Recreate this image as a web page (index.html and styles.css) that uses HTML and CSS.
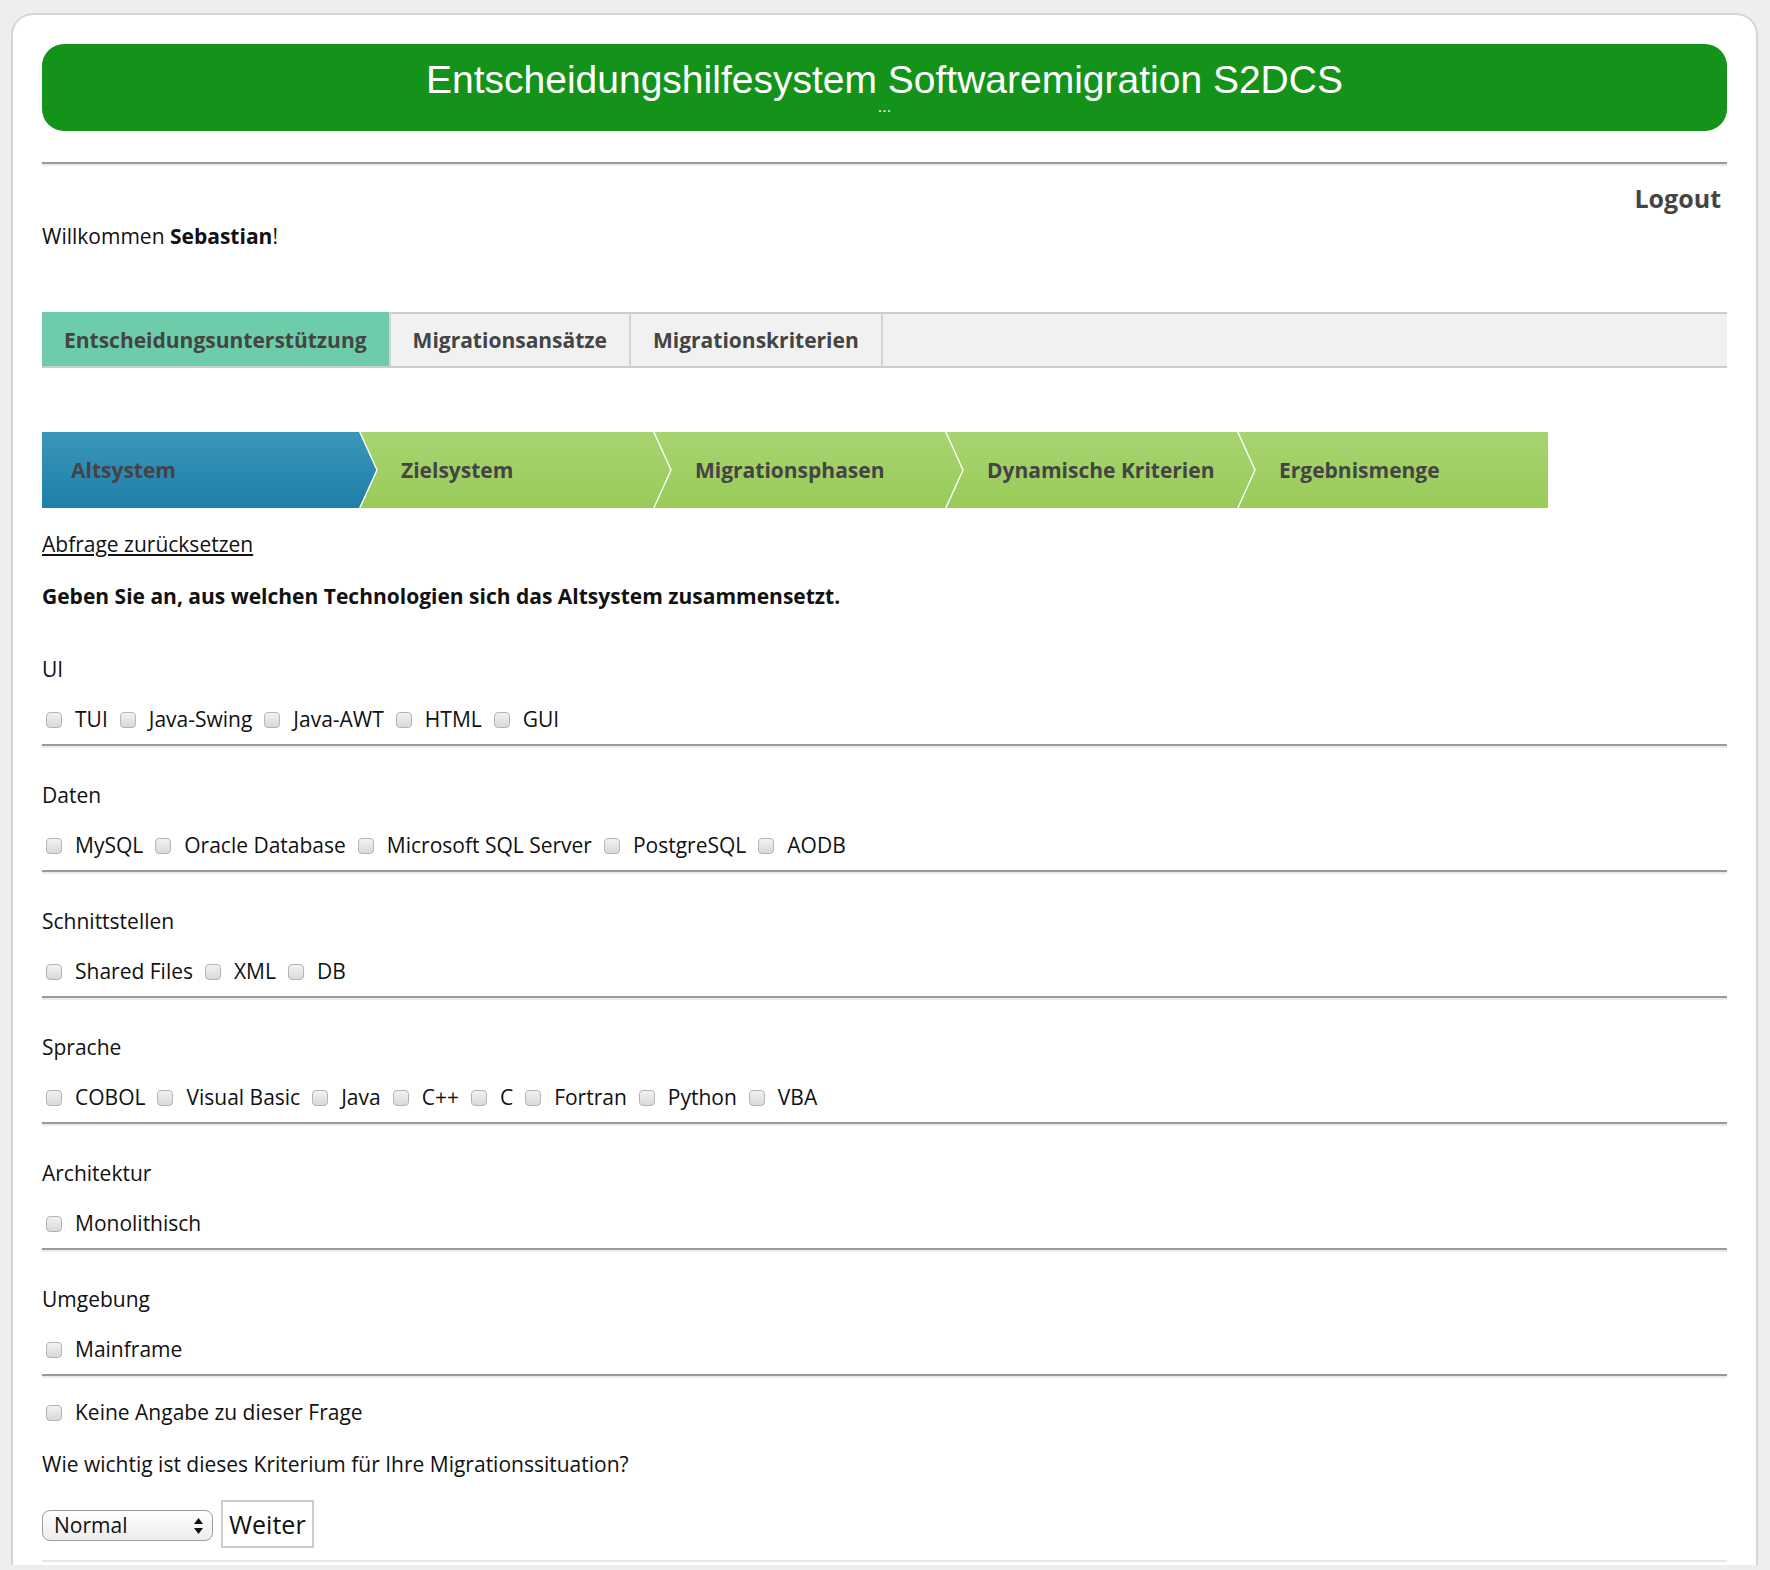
FILE: index.html
```html
<!DOCTYPE html>
<html lang="de">
<head>
<meta charset="utf-8">
<title>Entscheidungshilfesystem Softwaremigration S2DCS</title>
<link rel="stylesheet" href="styles.css">
</head>
<body>
<div class="page">
  <header class="banner">
    <h1 class="banner-title">Entscheidungshilfesystem Softwaremigration S2DCS</h1>
    <div class="banner-sub">...</div>
  </header>
  <hr class="rule rule-top">
  <div class="logout-row"><a class="logout" href="#">Logout</a></div>
  <p class="welcome">Willkommen <strong>Sebastian</strong>!</p>

  <nav class="tabs">
    <a class="tab tab-active" href="#">Entscheidungsunterstützung</a>
    <a class="tab" href="#">Migrationsansätze</a>
    <a class="tab" href="#">Migrationskriterien</a>
  </nav>

  <div class="steps">
    <div class="step step-first step-current">Altsystem</div>
    <div class="step step-mid"><svg class="chev" viewBox="0 0 19 76" width="19" height="76"><polyline points="0.8,0 18,38 0.8,76" fill="none" stroke="#fff" stroke-width="1.4"/></svg>Zielsystem</div>
    <div class="step step-mid step-w2"><svg class="chev" viewBox="0 0 19 76" width="19" height="76"><polyline points="0.8,0 18,38 0.8,76" fill="none" stroke="#fff" stroke-width="1.4"/></svg>Migrationsphasen</div>
    <div class="step step-mid step-w2"><svg class="chev" viewBox="0 0 19 76" width="19" height="76"><polyline points="0.8,0 18,38 0.8,76" fill="none" stroke="#fff" stroke-width="1.4"/></svg>Dynamische Kriterien</div>
    <div class="step step-last"><svg class="chev" viewBox="0 0 19 76" width="19" height="76"><polyline points="0.8,0 18,38 0.8,76" fill="none" stroke="#fff" stroke-width="1.4"/></svg>Ergebnismenge</div>
  </div>

  <a class="reset" href="#">Abfrage zurücksetzen</a>
  <p class="question">Geben Sie an, aus welchen Technologien sich das Altsystem zusammensetzt.</p>

  <form class="form">
    <div class="group group-first">
      <div class="group-label">UI</div>
      <div class="opts">
        <label class="opt"><input type="checkbox">TUI</label>
        <label class="opt"><input type="checkbox">Java-Swing</label>
        <label class="opt"><input type="checkbox">Java-AWT</label>
        <label class="opt"><input type="checkbox">HTML</label>
        <label class="opt"><input type="checkbox">GUI</label>
      </div>
      <hr class="rule rule-group">
    </div>
    <div class="group">
      <div class="group-label">Daten</div>
      <div class="opts">
        <label class="opt"><input type="checkbox">MySQL</label>
        <label class="opt"><input type="checkbox">Oracle Database</label>
        <label class="opt"><input type="checkbox">Microsoft SQL Server</label>
        <label class="opt"><input type="checkbox">PostgreSQL</label>
        <label class="opt"><input type="checkbox">AODB</label>
      </div>
      <hr class="rule rule-group">
    </div>
    <div class="group">
      <div class="group-label">Schnittstellen</div>
      <div class="opts">
        <label class="opt"><input type="checkbox">Shared Files</label>
        <label class="opt"><input type="checkbox">XML</label>
        <label class="opt"><input type="checkbox">DB</label>
      </div>
      <hr class="rule rule-group">
    </div>
    <div class="group">
      <div class="group-label">Sprache</div>
      <div class="opts">
        <label class="opt"><input type="checkbox">COBOL</label>
        <label class="opt"><input type="checkbox">Visual Basic</label>
        <label class="opt"><input type="checkbox">Java</label>
        <label class="opt"><input type="checkbox">C++</label>
        <label class="opt"><input type="checkbox">C</label>
        <label class="opt"><input type="checkbox">Fortran</label>
        <label class="opt"><input type="checkbox">Python</label>
        <label class="opt"><input type="checkbox">VBA</label>
      </div>
      <hr class="rule rule-group">
    </div>
    <div class="group">
      <div class="group-label">Architektur</div>
      <div class="opts">
        <label class="opt"><input type="checkbox">Monolithisch</label>
      </div>
      <hr class="rule rule-group">
    </div>
    <div class="group">
      <div class="group-label">Umgebung</div>
      <div class="opts">
        <label class="opt"><input type="checkbox">Mainframe</label>
      </div>
      <hr class="rule rule-group">
    </div>

    <div class="opts opts-none">
      <label class="opt"><input type="checkbox">Keine Angabe zu dieser Frage</label>
    </div>
    <p class="importance">Wie wichtig ist dieses Kriterium für Ihre Migrationssituation?</p>
    <div class="controls">
      <span class="select-wrap">
        <select class="select">
          <option>Normal</option>
          <option>Wichtig</option>
          <option>Unwichtig</option>
        </select>
        <svg class="select-arrows" viewBox="0 0 9 16" width="9" height="16"><polygon points="4.5,0 9,6 0,6" fill="#111"/><polygon points="0,10 9,10 4.5,16" fill="#111"/></svg>
      </span>
      <button type="button" class="btn">Weiter</button>
    </div>
    <div class="form-end"></div>
  </form>
</div>
</body>
</html>
```
FILE: styles.css
```css
html, body {
  margin: 0;
  padding: 0;
}
body {
  background: #eeeeee;
  font-family: "Open Sans", "DejaVu Sans", sans-serif;
  font-size: 21px;
  color: #111;
}
.page {
  margin: 13px 12px 0 11px;
  background: #fff;
  border: 2px solid #d6d6d6;
  border-bottom: 0;
  border-radius: 22px 22px 0 0;
  padding: 29px 29px 3px;
}
.banner {
  background: #14931a;
  border-radius: 22px;
  height: 87px;
  box-sizing: border-box;
  padding-top: 16px;
  text-align: center;
  color: #fff;
}
.banner-title {
  margin: 0;
  font-family: "Liberation Sans", Arial, sans-serif;
  font-weight: normal;
  font-size: 39px;
  line-height: 39px;
}
.banner-sub {
  font-family: "Liberation Sans", Arial, sans-serif;
  font-size: 16px;
  line-height: 16px;
}
.rule {
  display: block;
  height: 0;
  margin: 0;
  border: 0;
  border-top: 2px solid #9a9a9a;
  border-bottom: 2px solid #ececec;
}
.rule-top {
  margin-top: 31px;
}
.logout-row {
  margin-top: 15px;
  text-align: right;
  padding-right: 6px;
  line-height: 34px;
}
.logout {
  font-weight: 700;
  font-size: 25px;
  color: #444;
  text-decoration: none;
}
.welcome {
  margin: 4px 0 0;
  line-height: 30px;
}
.tabs {
  margin-top: 61px;
  display: flex;
  height: 52px;
  background: #f1f1f1;
  border-top: 2px solid #cccccc;
  border-bottom: 2px solid #cccccc;
}
.tab {
  display: block;
  padding: 0 22px;
  line-height: 52px;
  font-size: 21px;
  font-weight: 700;
  color: #444;
  text-decoration: none;
  border-right: 2px solid #d4d4d4;
}
.tab-active {
  background: #6dcca9;
  margin-top: -2px;
  padding-top: 2px;
}
.steps {
  margin-top: 64px;
  display: flex;
  width: 1506px;
  height: 76px;
  background: linear-gradient(#a8d470, #99cb5a);
}
.step {
  position: relative;
  flex: none;
  box-sizing: border-box;
  height: 76px;
  line-height: 76px;
  font-size: 21px;
  font-weight: 700;
  color: #444;
  margin-right: -18px;
  padding-left: 42px;
}
.step-first {
  width: 335px;
  padding-left: 29px;
  background: linear-gradient(#3b96ba, #1e7fa8);
  clip-path: polygon(0 0, calc(100% - 18px) 0, 100% 50%, calc(100% - 18px) 100%, 0 100%);
}
.step-mid {
  width: 312px;
}
.step-w2 {
  width: 310px;
}
.step-last {
  width: 311px;
  margin-right: 0;
}
.chev {
  position: absolute;
  left: 0;
  top: 0;
  display: block;
}
.reset {
  display: block;
  margin-top: 21px;
  line-height: 30px;
  color: #111;
  text-decoration: underline;
  width: max-content;
}
.question {
  margin: 22px 0 0;
  line-height: 30px;
  font-weight: 700;
}
.form {
  margin: 0;
}
.group {
  margin-top: 32px;
}
.group-first {
  margin-top: 43px;
}
.group-label {
  line-height: 30px;
}
.opts {
  display: flex;
  align-items: center;
  height: 30px;
  margin-top: 20px;
}
.opt {
  display: inline-flex;
  align-items: center;
  margin-right: 8px;
  line-height: 30px;
}
.opt input {
  appearance: none;
  -webkit-appearance: none;
  box-sizing: border-box;
  width: 16px;
  height: 16px;
  margin: 2px 13px 0 4px;
  border: 1px solid #b4b4b4;
  border-radius: 4px;
  background: linear-gradient(#f2f2f2, #d9d9d9);
}
.rule-group {
  margin-top: 10px;
}
.opts-none {
  margin-top: 19px;
}
.importance {
  margin: 22px 0 0;
  line-height: 30px;
}
.controls {
  margin-top: 21px;
  display: flex;
  align-items: center;
  gap: 8px;
}
.select-wrap {
  position: relative;
  display: inline-block;
}
.select {
  appearance: none;
  -webkit-appearance: none;
  display: block;
  width: 171px;
  height: 31px;
  box-sizing: border-box;
  margin: 2px 0 0;
  padding: 0 0 0 11px;
  border: 1px solid #9e9e9e;
  border-radius: 8px;
  background: linear-gradient(#ffffff, #ededed);
  font-family: "Open Sans", sans-serif;
  font-size: 21px;
  color: #111;
}
.select-arrows {
  position: absolute;
  right: 10px;
  top: 10px;
}
.btn {
  height: 48px;
  box-sizing: border-box;
  padding: 0 6px;
  border: 2px solid #cccccc;
  background: #fff;
  font-family: "Open Sans", sans-serif;
  font-size: 25px;
  color: #111;
}
.form-end {
  margin-top: 12px;
  border-top: 2px solid #e8e8e8;
}
```
